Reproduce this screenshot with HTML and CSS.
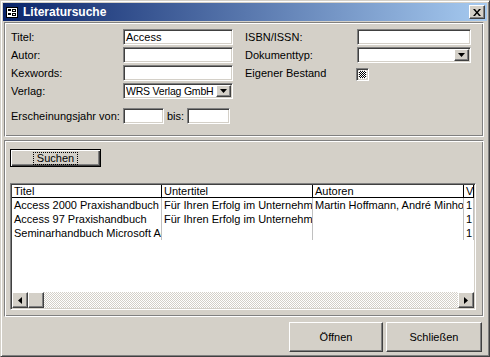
FILE: index.html
```html
<!DOCTYPE html>
<html lang="de">
<head>
    <meta charset="UTF-8">
    <title>Literatursuche</title>
    <link rel="stylesheet" href="styles.css">
</head>
<body>
<div class="window">
    <div class="titlebar">
        <svg class="app-icon" width="12" height="11" viewBox="0 0 12 11">
            <rect x="0.5" y="0.5" width="11" height="10" fill="#fff" stroke="#000"/>
            <rect x="2" y="2" width="3" height="2" fill="#000"/>
            <rect x="6.5" y="2.5" width="3" height="2" fill="#fff" stroke="#000"/>
            <rect x="2" y="6" width="3" height="2" fill="#000"/>
            <rect x="6.5" y="6.5" width="3" height="2" fill="#fff" stroke="#000"/>
        </svg>
        <span class="title">Literatursuche</span>
        <div class="close raised">
            <svg width="8" height="7" viewBox="0 0 8 7">
                <path d="M0 0h2l2 2.5 2-2.5h2l-3 3.5 3 3.5h-2l-2-2.5-2 2.5h-2l3-3.5z" fill="#000"/>
            </svg>
        </div>
    </div>

    <div class="section criteria">
        <div class="col">
            <div class="row"><span class="label">Titel:</span><div class="field sunken">Access</div></div>
            <div class="row"><span class="label">Autor:</span><div class="field sunken"></div></div>
            <div class="row"><span class="label">Kexwords:</span><div class="field sunken"></div></div>
            <div class="row">
                <span class="label">Verlag:</span>
                <div class="field combo sunken">
                    <span class="combo-text">WRS Verlag GmbH</span>
                    <span class="drop raised"><svg width="7" height="4" viewBox="0 0 7 4"><path d="M0 0h7l-3.5 4z" fill="#000"/></svg></span>
                </div>
            </div>
            <div class="row year">
                <span class="label">Erscheinungsjahr von:</span>
                <div class="field small sunken"></div>
                <span class="bis">bis:</span>
                <div class="field small2 sunken"></div>
            </div>
        </div>
        <div class="col right">
            <div class="row"><span class="label">ISBN/ISSN:</span><div class="field wide sunken"></div></div>
            <div class="row">
                <span class="label">Dokumenttyp:</span>
                <div class="field wide combo sunken">
                    <span class="combo-text"></span>
                    <span class="drop raised"><svg width="7" height="4" viewBox="0 0 7 4"><path d="M0 0h7l-3.5 4z" fill="#000"/></svg></span>
                </div>
            </div>
            <div class="row">
                <span class="label">Eigener Bestand</span>
                <span class="check sunken"><span class="check-mark"></span></span>
            </div>
        </div>
    </div>

    <div class="section results">
        <div class="btn default"><span class="focus">Suchen</span></div>
        <div class="listbox sunken">
            <div class="grid">
                <div class="head">Titel</div>
                <div class="head">Untertitel</div>
                <div class="head">Autoren</div>
                <div class="head">Verlag</div>

                <div class="cell">Access 2000 Praxishandbuch</div>
                <div class="cell">Für Ihren Erfolg im Unternehmen</div>
                <div class="cell">Martin Hoffmann, André Minhorst</div>
                <div class="cell">1</div>

                <div class="cell">Access 97 Praxishandbuch</div>
                <div class="cell">Für Ihren Erfolg im Unternehmen</div>
                <div class="cell"></div>
                <div class="cell">1</div>

                <div class="cell">Seminarhandbuch Microsoft Access</div>
                <div class="cell"></div>
                <div class="cell"></div>
                <div class="cell">1</div>
            </div>
            <div class="spacer"></div>
            <div class="hscroll">
                <span class="sb-btn raised"><svg width="4" height="7" viewBox="0 0 4 7"><path d="M4 0v7l-4-3.5z" fill="#000"/></svg></span>
                <span class="sb-btn raised"></span>
                <span class="track"></span>
                <span class="sb-btn raised"><svg width="4" height="7" viewBox="0 0 4 7"><path d="M0 0v7l4-3.5z" fill="#000"/></svg></span>
            </div>
        </div>
    </div>

    <div class="actions">
        <div class="btn raised open">Öffnen</div>
        <div class="btn raised shut">Schließen</div>
    </div>
</div>
</body>
</html>
```

FILE: styles.css
```css
:root {
    --face: #D4D0C8;
    --shadow: #808080;
    --dark: #404040;
}
body {
    margin: 0;
    padding: 0;
    background: var(--face);
    font-family: "Liberation Sans", Arial, sans-serif;
    font-size: 11px;
    color: #000;
}
.window {
    width: 490px;
    height: 357px;
    box-sizing: border-box;
    background: var(--face);
    border: 1px solid;
    border-color: var(--face) var(--dark) var(--dark) var(--face);
    box-shadow: inset 1px 1px #fff, inset -1px -1px var(--shadow);
    padding: 2px;
    display: flex;
    flex-direction: column;
}

/* bevels */
.raised {
    box-sizing: border-box;
    background: var(--face);
    border: 1px solid;
    border-color: #fff var(--dark) var(--dark) #fff;
    box-shadow: inset -1px -1px var(--shadow);
}
.sunken {
    box-sizing: border-box;
    background: #fff;
    border: 1px solid;
    border-color: var(--shadow) #fff #fff var(--shadow);
    box-shadow: inset 1px 1px var(--dark), inset -1px -1px var(--face);
}

/* title bar */
.titlebar {
    height: 18px;
    display: flex;
    align-items: center;
    padding: 0 2px 0 3px;
    background: linear-gradient(to right, #0A246A, #A6CAF0);
    color: #fff;
}
.app-icon {
    margin-top: 1px;
}
.title {
    flex: 1;
    margin-left: 5px;
    font-weight: bold;
    font-size: 12px;
}
.close {
    width: 16px;
    height: 14px;
    display: flex;
    align-items: center;
    justify-content: center;
}

/* sections */
.section {
    box-sizing: border-box;
    width: 480px;
    margin-left: 1px;
    border: 1px solid;
    border-color: var(--shadow) #fff #fff var(--shadow);
    box-shadow: inset 1px 1px #fff, inset -1px -1px var(--shadow);
}
.criteria {
    margin-top: 1px;
    height: 115px;
    padding: 6px 0 0 6px;
    display: flex;
    gap: 12px;
}
.col {
    width: 222px;
    display: flex;
    flex-direction: column;
    gap: 2px;
}
.col.right {
    width: 226px;
}
.row {
    height: 16px;
    display: flex;
    align-items: center;
}
.label {
    width: 112px;
    flex-shrink: 0;
    line-height: 16px;
}
.field {
    width: 110px;
    height: 16px;
    padding: 0 2px;
    line-height: 14px;
    white-space: nowrap;
    overflow: hidden;
}
.field.wide {
    width: 114px;
}
.combo {
    display: flex;
    align-items: center;
    padding: 1px 1px 1px 2px;
}
.combo-text {
    flex: 1;
    font-size: 10.5px;
    line-height: 12px;
    letter-spacing: -0.2px;
    overflow: hidden;
}
.drop {
    width: 15px;
    height: 12px;
    flex-shrink: 0;
    display: flex;
    align-items: center;
    justify-content: center;
}
.row.year {
    margin-top: 7px;
}
.field.small {
    width: 41px;
}
.bis {
    width: 20px;
    margin-left: 3px;
}
.field.small2 {
    width: 43px;
}
.check {
    width: 13px;
    height: 13px;
    margin: 3px 0 0 -1px;
    padding: 2px;
    background: repeating-conic-gradient(#fff 0 25%, var(--face) 0 50%) 0 0 / 2px 2px;
}
.check-mark {
    display: block;
    width: 7px;
    height: 7px;
    background: repeating-conic-gradient(#000 0 25%, #fff 0 50%) 0 0 / 2px 2px;
}

/* results */
.results {
    margin-top: 3px;
    height: 177px;
    padding: 8px 0 0 5px;
}
.btn {
    box-sizing: border-box;
    display: flex;
    align-items: center;
    justify-content: center;
}
.default {
    width: 91px;
    height: 18px;
    border: 1px solid #000;
    background: var(--face);
    box-shadow: inset 1px 1px #fff, inset -1px -1px var(--dark), inset -2px -2px var(--shadow);
}
.focus {
    border: 1px dotted #000;
    padding: 0 3px;
    line-height: 11px;
}
.listbox {
    width: 466px;
    height: 127px;
    margin-top: 16px;
    padding: 1px;
    display: flex;
    flex-direction: column;
}
.grid {
    display: grid;
    grid-template-columns: 150px 151px 151px 10px;
}
.head, .cell {
    box-sizing: border-box;
    padding-left: 2px;
    white-space: nowrap;
    overflow: hidden;
}
.head {
    height: 13px;
    line-height: 12px;
    border-right: 1px solid #000;
    border-bottom: 1px solid #000;
}
.cell {
    height: 14px;
    line-height: 14px;
    border-right: 1px solid #C0C0C0;
}
.spacer {
    flex: 1;
}
.hscroll {
    height: 16px;
    display: flex;
}
.sb-btn {
    width: 16px;
    height: 16px;
    display: flex;
    align-items: center;
    justify-content: center;
}
.track {
    flex: 1;
    background: repeating-conic-gradient(#fff 0 25%, var(--face) 0 50%) 0 0 / 2px 2px;
}

/* bottom buttons */
.actions {
    flex: 1;
    display: flex;
    justify-content: flex-end;
    gap: 3px;
    padding: 5px 5px 0 0;
}
.actions .btn {
    height: 30px;
}
.open {
    width: 94px;
}
.shut {
    width: 96px;
}
```
